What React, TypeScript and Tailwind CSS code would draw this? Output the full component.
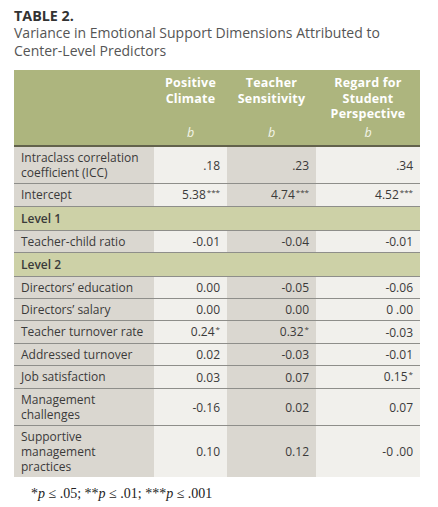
import React from "react";

type Row =
  | { kind: "data"; label: string[]; vals: [string, string, string]; sup?: [string, string, string] }
  | { kind: "level"; label: string };

const rows: Row[] = [
  { kind: "data", label: ["Intraclass correlation", "coefficient (ICC)"], vals: [".18", ".23", ".34"] },
  { kind: "data", label: ["Intercept"], vals: ["5.38", "4.74", "4.52"], sup: ["***", "***", "***"] },
  { kind: "level", label: "Level 1" },
  { kind: "data", label: ["Teacher-child ratio"], vals: ["-0.01", "-0.04", "-0.01"] },
  { kind: "level", label: "Level 2" },
  { kind: "data", label: ["Directors’ education"], vals: ["0.00", "-0.05", "-0.06"] },
  { kind: "data", label: ["Directors’ salary"], vals: ["0.00", "0.00", "0 .00"] },
  { kind: "data", label: ["Teacher turnover rate"], vals: ["0.24", "0.32", "-0.03"], sup: ["*", "*", ""] },
  { kind: "data", label: ["Addressed turnover"], vals: ["0.02", "-0.03", "-0.01"] },
  { kind: "data", label: ["Job satisfaction"], vals: ["0.03", "0.07", "0.15"], sup: ["", "", "*"] },
  { kind: "data", label: ["Management", "challenges"], vals: ["-0.16", "0.02", "0.07"] },
  { kind: "data", label: ["Supportive", "management", "practices"], vals: ["0.10", "0.12", "-0 .00"] },
];

const colBg = ["bg-[#f1f0ec]", "bg-[#dad7d0]", "bg-[#f1f0ec]"];

export default function App() {
  return (
    <div
      className="w-[438px] h-[507px] bg-white text-[#3a3a3a] pt-[7px] px-[14px]"
      style={{ fontFamily: '"Open Sans", "Liberation Sans", sans-serif' }}
    >
      <div className="text-[14.3px] font-bold leading-[17px] text-[#333]">TABLE 2.</div>
      <div className="text-[14px] leading-[18px] text-[#555]">
        Variance in Emotional Support Dimensions Attributed to
        <br />
        Center-Level Predictors
      </div>

      <div className="mt-[10px] w-[406px] grid grid-cols-[140px_73px_89px_104px] text-[12px] leading-[15px]">
        <div className="bg-[#adb57e] h-[77px] border-b-2 border-[#62624c]" />
        {[["Positive", "Climate"], ["Teacher", "Sensitivity"], ["Regard for", "Student", "Perspective"]].map((h, i) => (
          <div
            key={i}
            className="bg-[#adb57e] h-[77px] border-b-2 border-[#62624c] flex flex-col items-center justify-between pt-[5px] pb-[5px] text-white"
          >
            <div className="font-bold text-center leading-[15.5px] text-[12.5px] tracking-[0.2px]">
              {h.map((l, j) => (
                <div key={j}>{l}</div>
              ))}
            </div>
            <div className="italic text-[12.5px] text-[#f3f4e8]">b</div>
          </div>
        ))}

        {rows.map((r, idx) => {
          const last = idx === rows.length - 1;
          const bb = last ? "" : "border-b border-[#8e8e8a]";
          if (r.kind === "level") {
            return (
              <div
                key={idx}
                className={`col-span-4 bg-[#cdd1a7] px-[7px] py-[4px] font-semibold ${bb}`}
              >
                {r.label}
              </div>
            );
          }
          return (
            <React.Fragment key={idx}>
              <div className={`bg-[#dad7d0] px-[7px] py-[3px] ${bb}`}>
                {r.label.map((l, j) => (
                  <div key={j} className="whitespace-nowrap">{l}</div>
                ))}
              </div>
              {r.vals.map((v, j) => (
                <div
                  key={j}
                  className={`${colBg[j]} px-[7px] py-[3px] flex items-center justify-end ${bb}`}
                >
                  <span className="whitespace-nowrap">
                    {v}
                    {r.sup && r.sup[j] ? (
                      <span className="text-[8px] relative top-[-4px] ml-[1px]">{r.sup[j]}</span>
                    ) : null}
                  </span>
                </div>
              ))}
            </React.Fragment>
          );
        })}
      </div>

      <div
        className="mt-[6px] ml-[17px] text-[14px] text-[#222]"
        style={{ fontFamily: '"Liberation Serif", serif' }}
      >
        *<i>p</i> ≤ .05; **<i>p</i> ≤ .01; ***<i>p</i> ≤ .001
      </div>
    </div>
  );
}
